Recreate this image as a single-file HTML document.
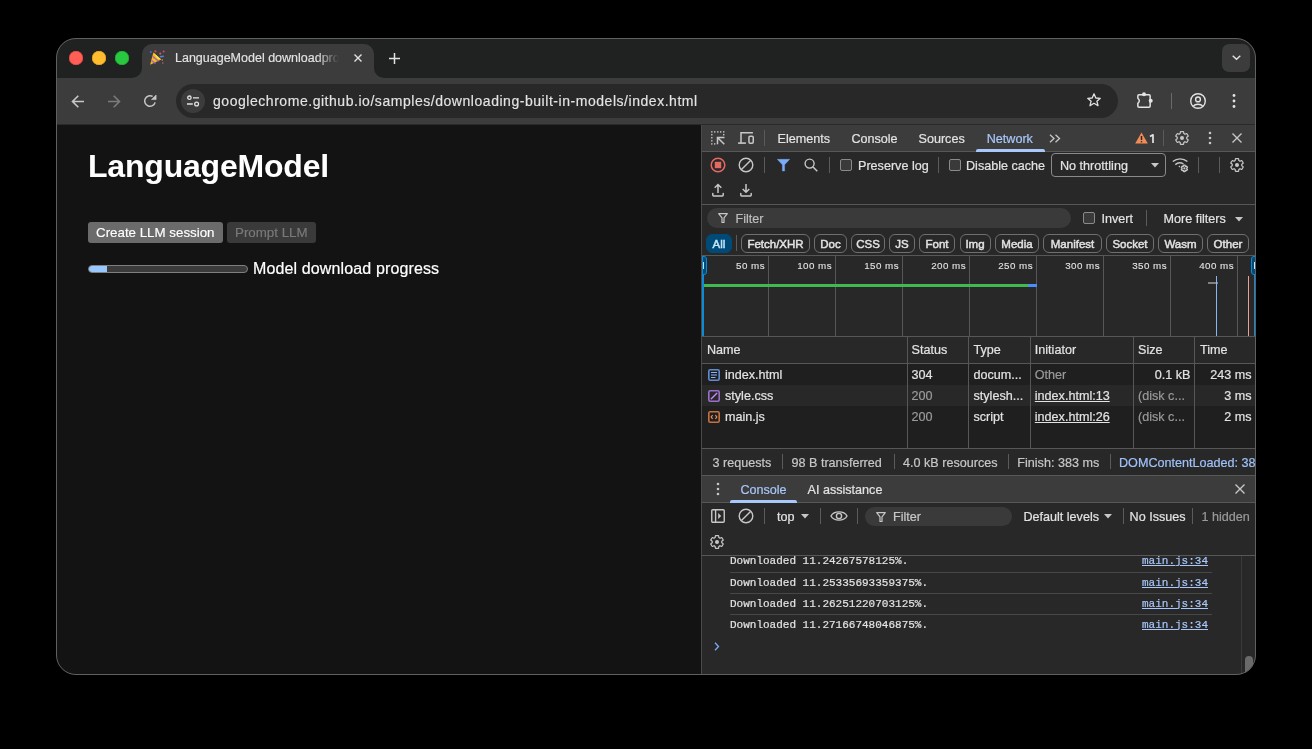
<!DOCTYPE html>
<html><head><meta charset="utf-8">
<style>
*{box-sizing:border-box}
html,body{margin:0;padding:0}
body{width:1312px;height:749px;background:#000;position:relative;overflow:hidden;font-family:"Liberation Sans",sans-serif;}
#win{position:absolute;left:0;top:0;width:1312px;height:749px;clip-path:inset(38px 56px 74px 56px round 20px);will-change:transform}
.a{position:absolute}
.t{position:absolute;white-space:nowrap;line-height:1}
.dt{font-size:12.6px;color:#e3e3e3;margin-top:1px;-webkit-text-stroke:0.2px currentColor}
svg{position:absolute;overflow:visible}
.sep{position:absolute;width:1px;background:#5b5b5b}
.chip{position:absolute;top:234px;height:19px;border:1px solid #6f6f6f;border-radius:6px;color:#e3e3e3;font-size:11.5px;line-height:18px;text-align:center;-webkit-text-stroke:0.45px currentColor}
.hl{position:absolute;height:1px;background:#575757}
.vl{position:absolute;width:1px;background:#575757}
.mono{font-family:"Liberation Mono",monospace;font-size:11px;-webkit-text-stroke:0.2px currentColor}
</style></head><body>
<div id="win">
  <!-- tab strip -->
  <div class="a" style="left:56px;top:38px;width:1200px;height:40px;background:#202121"></div>
  <!-- traffic lights -->
  <div class="a" style="left:69px;top:51px;width:14px;height:14px;border-radius:50%;background:#ff5f57;box-shadow:inset 0 0 0 0.6px #e0443e"></div>
  <div class="a" style="left:92px;top:51px;width:14px;height:14px;border-radius:50%;background:#febc2e;box-shadow:inset 0 0 0 0.6px #dea123"></div>
  <div class="a" style="left:115px;top:51px;width:14px;height:14px;border-radius:50%;background:#28c840;box-shadow:inset 0 0 0 0.6px #1aab29"></div>
  <!-- active tab -->
  <div class="a" style="left:142px;top:44px;width:232px;height:40px;background:#3c3c3c;border-radius:10px 10px 0 0"></div>
  <div class="a" style="left:132px;top:68px;width:10px;height:10px;background:#3c3c3c"></div>
  <div class="a" style="left:132px;top:68px;width:10px;height:10px;background:#202121;border-radius:0 0 10px 0"></div>
  <div class="a" style="left:374px;top:68px;width:10px;height:10px;background:#3c3c3c"></div>
  <div class="a" style="left:374px;top:68px;width:10px;height:10px;background:#202121;border-radius:0 0 0 10px"></div>
  <div class="t" id="tabtitle" style="left:175px;top:52px;font-size:12.5px;color:#e3e3e3;-webkit-text-stroke:0.15px currentColor;width:168px;overflow:hidden;-webkit-mask-image:linear-gradient(90deg,#000 142px,transparent 164px)">LanguageModel downloadprogress</div>
  <!-- party emoji approx -->
  <svg style="left:146px;top:46px" width="24" height="24" viewBox="0 0 24 24">
    <path d="M4.2 18.8 L7.3 6.6 L15.2 13.6 Z" fill="#f2c200"/>
    <path d="M7.3 6.6 L15.2 13.6 L11.5 12.8 Z" fill="#ffe14d"/>
    <path d="M6.6 10.4 L12.6 15.3 M5.4 14.6 L9.6 17.3" stroke="#b05cd6" stroke-width="1.4"/>
    <circle cx="4.8" cy="6" r="1.1" fill="#2f6fd8"/>
    <circle cx="9.4" cy="5.3" r="1.1" fill="#e0405a"/>
    <circle cx="14.3" cy="7.6" r="1.1" fill="#d8507a"/>
    <circle cx="17.6" cy="5.6" r="1" fill="#d84a6a"/>
    <path d="M13.8 10.8 L17.8 10.2" stroke="#4a86e8" stroke-width="1.5"/>
    <circle cx="16.3" cy="14" r="0.8" fill="#e08a20"/>
    <circle cx="16.8" cy="17" r="0.8" fill="#c06080"/>
  </svg>
  <!-- tab close -->
  <svg style="left:353.8px;top:53.7px" width="8" height="8" viewBox="0 0 8 8"><path d="M0.5 0.5 L7.5 7.5 M7.5 0.5 L0.5 7.5" stroke="#e3e3e3" stroke-width="1.4"/></svg>
  <!-- new tab + -->
  <svg style="left:389px;top:52.5px" width="11" height="11" viewBox="0 0 11 11"><path d="M5.5 0 V11 M0 5.5 H11" stroke="#e3e3e3" stroke-width="1.5"/></svg>
  <!-- tab search dropdown -->
  <div class="a" style="left:1222px;top:44px;width:28px;height:27.5px;background:#3c3c3c;border-radius:7px"></div>
  <svg style="left:1231.5px;top:54.5px" width="9" height="5" viewBox="0 0 9 5"><path d="M0.7 0.7 L4.5 4.2 L8.3 0.7" stroke="#e3e3e3" stroke-width="1.4" fill="none"/></svg>

  <!-- toolbar -->
  <div class="a" style="left:56px;top:78px;width:1200px;height:46px;background:#3c3c3c"></div>
  <div class="a" style="left:56px;top:124px;width:1200px;height:1px;background:#2a2a2a"></div>
  <svg style="left:71px;top:94.5px" width="14" height="13" viewBox="0 0 14 13"><path d="M13 6.5 H1.5 M7.3 0.7 L1.5 6.5 L7.3 12.3" stroke="#c7c7c7" stroke-width="1.6" fill="none"/></svg>
  <svg style="left:107px;top:94.5px" width="14" height="13" viewBox="0 0 14 13"><path d="M1 6.5 H12.5 M6.7 0.7 L12.5 6.5 L6.7 12.3" stroke="#7b7b7b" stroke-width="1.6" fill="none"/></svg>
  <svg style="left:143px;top:94px" width="14" height="14" viewBox="0 0 14 14"><path d="M9.65 2.41 A5.3 5.3 0 1 0 12.12 8.37" stroke="#c7c7c7" stroke-width="1.5" fill="none"/><path d="M8.5 5.6 H13.1 V1 Z" fill="#c7c7c7" stroke="#c7c7c7" stroke-width="0.6" stroke-linejoin="round"/></svg>
  <div class="a" style="left:176px;top:84px;width:942px;height:34px;border-radius:17px;background:#282828"></div>
  <div class="a" style="left:181px;top:89px;width:24px;height:24px;border-radius:50%;background:#3c3c3c"></div>
  <svg style="left:186px;top:95px" width="14" height="12" viewBox="0 0 14 12"><circle cx="3.4" cy="2.7" r="1.7" stroke="#e3e3e3" stroke-width="1.3" fill="none"/><path d="M7 2.8 H13 M1 9 H6.8" stroke="#e3e3e3" stroke-width="1.3"/><circle cx="10.6" cy="9" r="1.9" stroke="#e3e3e3" stroke-width="1.3" fill="none"/></svg>
  <div class="t" id="url" style="left:213px;top:94.2px;font-size:14px;letter-spacing:0.54px;color:#e3e3e3;-webkit-text-stroke:0.15px currentColor">googlechrome.github.io/samples/downloading-built-in-models/index.html</div>
  <svg style="left:1087px;top:93px" width="14" height="14" viewBox="0 0 14 14"><path d="M7 0.8 L8.8 5 L13.3 5.3 L9.9 8.2 L11 12.7 L7 10.3 L3 12.7 L4.1 8.2 L0.7 5.3 L5.2 5 Z" stroke="#e3e3e3" stroke-width="1.3" fill="none" stroke-linejoin="round"/></svg>
  <svg style="left:1136px;top:91px" width="18" height="18" viewBox="0 0 18 18"><path d="M1.85 5 Q1.85 3.85 3 3.85 H13 Q14.15 3.85 14.15 5 V15 Q14.15 16.15 13 16.15 H3 Q1.85 16.15 1.85 15 V12.4 Q4.8 9.8 1.85 7.2 Z" stroke="#e3e3e3" stroke-width="1.5" fill="none" stroke-linejoin="round"/><circle cx="8" cy="3.3" r="2" fill="#e3e3e3"/><circle cx="14.7" cy="9.8" r="2" fill="#e3e3e3"/></svg>
  <div class="sep" style="left:1171px;top:93px;height:16px;background:#6a6a6a"></div>
  <svg style="left:1190px;top:93px" width="16" height="16" viewBox="0 0 16 16"><circle cx="8" cy="8" r="7.3" stroke="#e3e3e3" stroke-width="1.4" fill="none"/><circle cx="8" cy="6.4" r="2.4" stroke="#e3e3e3" stroke-width="1.4" fill="none"/><path d="M3.3 13.2 C5.2 10.6 10.8 10.6 12.7 13.2" stroke="#e3e3e3" stroke-width="1.4" fill="none"/></svg>
  <svg style="left:1232px;top:93px" width="4" height="16" viewBox="0 0 4 16"><circle cx="2" cy="2.5" r="1.4" fill="#e3e3e3"/><circle cx="2" cy="8" r="1.4" fill="#e3e3e3"/><circle cx="2" cy="13.5" r="1.4" fill="#e3e3e3"/></svg>

  <!-- page content -->
  <div class="a" style="left:56px;top:125px;width:645px;height:550px;background:#131313"></div>
  <div class="t" id="h1" style="left:88px;top:150px;font-size:32px;letter-spacing:-0.2px;font-weight:bold;color:#fff">LanguageModel</div>
  <div class="a" style="left:88px;top:222px;width:135px;height:21px;background:#6b6b6b;border-radius:3px"></div>
  <div class="t" style="left:96px;top:225.7px;font-size:13.33px;color:#fff;-webkit-text-stroke:0.15px currentColor">Create LLM session</div>
  <div class="a" style="left:227px;top:222px;width:89px;height:21px;background:#3a3a3a;border-radius:3px"></div>
  <div class="t" style="left:235px;top:225.7px;font-size:13.33px;color:#7a7a7a;-webkit-text-stroke:0.15px currentColor">Prompt LLM</div>
  <div class="a" style="left:88px;top:265px;width:160px;height:8px;background:#3b3b3b;border:1px solid #7f7f7f;border-radius:4px;overflow:hidden"><div style="width:18px;height:100%;background:#99c8ff"></div></div>
  <div class="t" id="mdp" style="left:253px;top:261px;font-size:16px;letter-spacing:0.13px;color:#fff;-webkit-text-stroke:0.2px currentColor">Model download progress</div>

  <!-- devtools -->
  <div class="a" style="left:701px;top:125px;width:1px;height:550px;background:#4a4a4a"></div>
  <div class="a" style="left:702px;top:125px;width:554px;height:550px;background:#282828"></div>
  <!-- main tab bar -->
  <div class="a" style="left:702px;top:125px;width:554px;height:26px;background:#3c3c3c"></div>
  <div class="hl" style="left:702px;top:151px;width:554px;"></div>
  <svg style="left:710px;top:130px" width="16" height="16" viewBox="0 0 16 16"><rect x="1.10" y="1.20" width="1.4" height="1.4" fill="#c7c7c7"/><rect x="4.00" y="1.20" width="1.4" height="1.4" fill="#c7c7c7"/><rect x="7.10" y="1.20" width="1.4" height="1.4" fill="#c7c7c7"/><rect x="10.00" y="1.20" width="1.4" height="1.4" fill="#c7c7c7"/><rect x="13.00" y="1.20" width="1.4" height="1.4" fill="#c7c7c7"/><rect x="1.10" y="4.00" width="1.4" height="1.4" fill="#c7c7c7"/><rect x="1.10" y="7.10" width="1.4" height="1.4" fill="#c7c7c7"/><rect x="1.10" y="10.10" width="1.4" height="1.4" fill="#c7c7c7"/><rect x="1.10" y="13.20" width="1.4" height="1.4" fill="#c7c7c7"/><rect x="13.00" y="4.00" width="1.4" height="1.4" fill="#c7c7c7"/><rect x="4.00" y="13.20" width="1.4" height="1.4" fill="#c7c7c7"/><path d="M7.5 14.2 V7.5 H14.5 M7.5 7.5 L14.3 14.3" stroke="#c7c7c7" stroke-width="1.5" fill="none"/></svg>
  <svg style="left:737px;top:130px" width="18" height="16" viewBox="0 0 18 16"><path d="M15.9 2.8 H4 V13" stroke="#c7c7c7" stroke-width="1.5" fill="none"/><path d="M1.1 13.1 H8.9" stroke="#c7c7c7" stroke-width="1.6"/><rect x="11.95" y="6.15" width="4.3" height="7.1" rx="1.2" stroke="#c7c7c7" stroke-width="1.5" fill="none"/></svg>
  <div class="sep" style="left:764px;top:130px;height:16px"></div>
  <div class="t dt" style="left:777.5px;top:132.3px">Elements</div>
  <div class="t dt" style="left:851.4px;top:132.3px">Console</div>
  <div class="t dt" style="left:918.5px;top:132.3px">Sources</div>
  <div class="t dt" style="left:986.7px;top:132.3px;color:#a8c7fa">Network</div>
  <div class="a" style="left:976px;top:148.5px;width:69px;height:3px;background:#a8c7fa;border-radius:2px 2px 0 0"></div>
  <svg style="left:1049px;top:134px" width="12" height="9" viewBox="0 0 12 9"><path d="M1 0.8 L5 4.5 L1 8.2 M6.5 0.8 L10.5 4.5 L6.5 8.2" stroke="#c7c7c7" stroke-width="1.3" fill="none"/></svg>
  <svg style="left:1134.5px;top:131.5px" width="13" height="12" viewBox="0 0 13 12"><path d="M6.5 0.5 L12.8 11.5 H0.2 Z" fill="#f28b55"/><path d="M6.5 4 V8" stroke="#282828" stroke-width="1.5"/><circle cx="6.5" cy="9.8" r="0.8" fill="#282828"/></svg>
  <svg style="left:1149px;top:133.5px" width="6" height="10" viewBox="0 0 6 10"><path d="M4 9 V0.8 L1 2.6" stroke="#e3e3e3" stroke-width="1.7" fill="none" stroke-linejoin="round"/></svg>
  <div class="sep" style="left:1163px;top:130px;height:16px"></div>
  <svg style="left:1173.5px;top:130px" width="16" height="16" viewBox="0 0 24 24"><path d="M19.14 12.94c.04-.3.06-.61.06-.94 0-.32-.02-.64-.07-.94l2.03-1.58a.49.49 0 0 0 .12-.61l-1.92-3.32a.488.488 0 0 0-.59-.22l-2.39.96c-.5-.38-1.03-.7-1.62-.94l-.36-2.54a.484.484 0 0 0-.48-.41h-3.84c-.24 0-.43.17-.47.41l-.36 2.54c-.59.24-1.13.57-1.62.94l-2.39-.96c-.22-.08-.47 0-.59.22L2.74 8.87c-.12.21-.08.47.12.61l2.03 1.58c-.05.3-.09.63-.09.94s.02.64.07.94l-2.03 1.58a.49.49 0 0 0-.12.61l1.92 3.32c.12.22.37.29.59.22l2.39-.96c.5.38 1.03.7 1.62.94l.36 2.54c.05.24.24.41.48.41h3.84c.24 0 .44-.17.47-.41l.36-2.54c.59-.24 1.13-.56 1.62-.94l2.39.96c.22.08.47 0 .59-.22l1.92-3.32c.12-.22.07-.47-.12-.61l-2.01-1.58z" stroke="#c7c7c7" stroke-width="1.8" fill="none"/><circle cx="12" cy="12" r="3" fill="#c7c7c7"/></svg>
  <svg style="left:1208px;top:131px" width="4" height="14" viewBox="0 0 4 14"><circle cx="2" cy="2" r="1.3" fill="#c7c7c7"/><circle cx="2" cy="7" r="1.3" fill="#c7c7c7"/><circle cx="2" cy="12" r="1.3" fill="#c7c7c7"/></svg>
  <svg style="left:1232px;top:133px" width="10" height="10" viewBox="0 0 10 10"><path d="M0.5 0.5 L9.5 9.5 M9.5 0.5 L0.5 9.5" stroke="#c7c7c7" stroke-width="1.4"/></svg>

  <!-- network toolbar -->
  <svg style="left:710px;top:157px" width="16" height="16" viewBox="0 0 16 16"><circle cx="8" cy="8" r="6.8" stroke="#e46962" stroke-width="1.5" fill="none"/><rect x="4.8" y="4.8" width="6.4" height="6.4" fill="#e46962"/></svg>
  <svg style="left:738px;top:157px" width="16" height="16" viewBox="0 0 16 16"><circle cx="8" cy="8" r="6.8" stroke="#c7c7c7" stroke-width="1.4" fill="none"/><path d="M3.2 12.8 L12.8 3.2" stroke="#c7c7c7" stroke-width="1.4"/></svg>
  <div class="sep" style="left:764px;top:157px;height:16px"></div>
  <svg style="left:776.5px;top:158.8px" width="13" height="13" viewBox="0 0 13 13"><path d="M0.3 0.3 H12.7 L7.6 5.8 V12 H5.4 V5.8 Z" fill="#7cacf8" stroke="#7cacf8" stroke-width="0.4" stroke-linejoin="round"/></svg>
  <svg style="left:804px;top:158px" width="14" height="14" viewBox="0 0 14 14"><circle cx="5.6" cy="5.6" r="4.5" stroke="#c7c7c7" stroke-width="1.4" fill="none"/><path d="M9 9 L13.3 13.3" stroke="#c7c7c7" stroke-width="1.5"/></svg>
  <div class="sep" style="left:829px;top:157px;height:16px"></div>
  <div class="a" style="left:840px;top:159px;width:12px;height:12px;border:1px solid #8a8a8a;border-radius:2px;background:#3a3a3a"></div>
  <div class="t dt" style="left:858px;top:159.3px">Preserve log</div>
  <div class="sep" style="left:938px;top:157px;height:16px"></div>
  <div class="a" style="left:949px;top:159px;width:12px;height:12px;border:1px solid #8a8a8a;border-radius:2px;background:#3a3a3a"></div>
  <div class="t dt" style="left:966px;top:159.3px">Disable cache</div>
  <div class="a" style="left:1051px;top:153px;width:115px;height:24px;border:1px solid #8a8a8a;border-radius:4px"></div>
  <div class="t dt" style="left:1060px;top:159.3px">No throttling</div>
  <svg style="left:1151px;top:162.5px" width="8" height="5" viewBox="0 0 8 5"><path d="M0 0 H8 L4 4.5 Z" fill="#c7c7c7"/></svg>
  <svg style="left:1172px;top:157px" width="17" height="15" viewBox="0 0 17 15"><path d="M0.8 4.6 A11 11 0 0 1 15.4 4.6 M3.3 7.6 A7 7 0 0 1 11.5 7" stroke="#c7c7c7" stroke-width="1.4" fill="none"/><path d="M6.3 9.6 L8 8.6 V10.6 Z" fill="#c7c7c7"/><g transform="translate(8.4 7.4) scale(0.33)"><path d="M19.14 12.94c.04-.3.06-.61.06-.94 0-.32-.02-.64-.07-.94l2.03-1.58a.49.49 0 0 0 .12-.61l-1.92-3.32a.488.488 0 0 0-.59-.22l-2.39.96c-.5-.38-1.03-.7-1.62-.94l-.36-2.54a.484.484 0 0 0-.48-.41h-3.84c-.24 0-.43.17-.47.41l-.36 2.54c-.59.24-1.13.57-1.62.94l-2.39-.96c-.22-.08-.47 0-.59.22L2.74 8.87c-.12.21-.08.47.12.61l2.03 1.58c-.05.3-.09.63-.09.94s.02.64.07.94l-2.03 1.58a.49.49 0 0 0-.12.61l1.92 3.32c.12.22.37.29.59.22l2.39-.96c.5.38 1.03.7 1.62.94l.36 2.54c.05.24.24.41.48.41h3.84c.24 0 .44-.17.47-.41l.36-2.54c.59-.24 1.13-.56 1.62-.94l2.39.96c.22.08.47 0 .59-.22l1.92-3.32c.12-.22.07-.47-.12-.61l-2.01-1.58z" stroke="#c7c7c7" stroke-width="4" fill="none"/><circle cx="12" cy="12" r="3.5" fill="#c7c7c7"/></g></svg>
  <div class="sep" style="left:1198px;top:157px;height:16px"></div>
  <div class="sep" style="left:1219px;top:157px;height:16px"></div>
  <svg style="left:1229px;top:157px" width="16" height="16" viewBox="0 0 24 24"><path d="M19.14 12.94c.04-.3.06-.61.06-.94 0-.32-.02-.64-.07-.94l2.03-1.58a.49.49 0 0 0 .12-.61l-1.920-3.32a.488.488 0 0 0-.59-.22l-2.39.96c-.5-.38-1.03-.7-1.62-.94l-.36-2.540a.484.484 0 0 0-.48-.41h-3.84c-.24 0-.43.17-.47.41l-.36 2.54c-.59.24-1.13.57-1.62.94l-2.39-.96c-.22-.08-.47 0-.59.22L2.74 8.87c-.12.21-.08.47.12.61l2.03 1.58c-.05.3-.09.63-.09.94s.02.64.07.94l-2.03 1.58a.49.49 0 0 0-.12.61l1.92 3.32c.12.22.37.29.59.22l2.39-.96c.5.38 1.030.7 1.62.94l.36 2.54c.05.24.24.41.48.41h3.84c.24 0 .44-.17.47-.41l.36-2.54c.59-.24 1.13-.56 1.62-.94l2.39.96c.22.08.47 0 .59-.22l1.92-3.32c.12-.22.07-.47-.12-.61l-2.01-1.58z" stroke="#c7c7c7" stroke-width="1.8" fill="none"/><circle cx="12" cy="12" r="3" fill="#c7c7c7"/></svg>
  <svg style="left:711px;top:183px" width="14" height="14" viewBox="0 0 14 14"><path d="M7 10 V1.5 M3.7 4.8 L7 1.5 L10.3 4.8" stroke="#c7c7c7" stroke-width="1.5" fill="none"/><path d="M1.8 10.6 V12.1 Q1.8 12.9 2.6 12.9 H11.4 Q12.2 12.9 12.2 12.1 V10.6" stroke="#c7c7c7" stroke-width="1.5" fill="none" stroke-linecap="round"/></svg>
  <svg style="left:739px;top:183px" width="14" height="14" viewBox="0 0 14 14"><path d="M7 1 V9.3 M3.7 6 L7 9.3 L10.3 6" stroke="#c7c7c7" stroke-width="1.5" fill="none"/><path d="M1.8 10.6 V12.1 Q1.8 12.9 2.6 12.9 H11.4 Q12.2 12.9 12.2 12.1 V10.6" stroke="#c7c7c7" stroke-width="1.5" fill="none" stroke-linecap="round"/></svg>
  <div class="hl" style="left:702px;top:204px;width:554px;"></div>

  <!-- filter row -->
  <div class="a" style="left:707px;top:208px;width:364px;height:20px;border-radius:10px;background:#3a3a3a"></div>
  <svg style="left:718px;top:213px" width="10" height="10" viewBox="0 0 10 10"><path d="M0.7 0.7 H9.3 L6 4.8 V9.5 H4 V4.8 Z" stroke="#c7c7c7" stroke-width="1.2" fill="none" stroke-linejoin="round"/></svg>
  <div class="t dt" style="left:735.5px;top:212.2px;color:#bdbdbd">Filter</div>
  <div class="a" style="left:1083px;top:212px;width:12px;height:12px;border:1px solid #8a8a8a;border-radius:2px;background:#3a3a3a"></div>
  <div class="t dt" style="left:1101.5px;top:212.2px">Invert</div>
  <div class="sep" style="left:1146px;top:210px;height:16px"></div>
  <div class="t dt" style="left:1163.5px;top:212.2px">More filters</div>
  <svg style="left:1235px;top:217px" width="8" height="5" viewBox="0 0 8 5"><path d="M0 0 H8 L4 4.5 Z" fill="#c7c7c7"/></svg>

  <!-- chips -->
  <div class="chip" style="left:706px;width:26px;background:#004a77;border-color:#004a77;color:#c2e7ff">All</div>
  <div class="sep" style="left:736px;top:235px;height:16px"></div>
  <div class="chip" style="left:741px;width:69px">Fetch/XHR</div>
  <div class="chip" style="left:814px;width:33px">Doc</div>
  <div class="chip" style="left:851px;width:34px">CSS</div>
  <div class="chip" style="left:889px;width:26px">JS</div>
  <div class="chip" style="left:919px;width:36px">Font</div>
  <div class="chip" style="left:959.5px;width:31px">Img</div>
  <div class="chip" style="left:995px;width:44px">Media</div>
  <div class="chip" style="left:1043px;width:59px">Manifest</div>
  <div class="chip" style="left:1106px;width:48px">Socket</div>
  <div class="chip" style="left:1158px;width:45px">Wasm</div>
  <div class="chip" style="left:1207px;width:42px">Other</div>
  <div class="hl" style="left:702px;top:255px;width:554px;"></div>

  <!-- timeline -->
  <div class="vl" style="left:768px;top:256px;height:80px"></div>
  <div class="vl" style="left:835px;top:256px;height:80px"></div>
  <div class="vl" style="left:902px;top:256px;height:80px"></div>
  <div class="vl" style="left:969px;top:256px;height:80px"></div>
  <div class="vl" style="left:1036px;top:256px;height:80px"></div>
  <div class="vl" style="left:1103px;top:256px;height:80px"></div>
  <div class="vl" style="left:1170px;top:256px;height:80px"></div>
  <div class="vl" style="left:1237px;top:256px;height:80px"></div>
  <div class="t" style="right:547px;top:261.2px;font-size:9.8px;letter-spacing:0.45px;color:#e3e3e3;-webkit-text-stroke:0.1px currentColor">50 ms</div>
  <div class="t" style="right:480px;top:261.2px;font-size:9.8px;letter-spacing:0.45px;color:#e3e3e3;-webkit-text-stroke:0.1px currentColor">100 ms</div>
  <div class="t" style="right:413px;top:261.2px;font-size:9.8px;letter-spacing:0.45px;color:#e3e3e3;-webkit-text-stroke:0.1px currentColor">150 ms</div>
  <div class="t" style="right:346px;top:261.2px;font-size:9.8px;letter-spacing:0.45px;color:#e3e3e3;-webkit-text-stroke:0.1px currentColor">200 ms</div>
  <div class="t" style="right:279px;top:261.2px;font-size:9.8px;letter-spacing:0.45px;color:#e3e3e3;-webkit-text-stroke:0.1px currentColor">250 ms</div>
  <div class="t" style="right:212px;top:261.2px;font-size:9.8px;letter-spacing:0.45px;color:#e3e3e3;-webkit-text-stroke:0.1px currentColor">300 ms</div>
  <div class="t" style="right:145px;top:261.2px;font-size:9.8px;letter-spacing:0.45px;color:#e3e3e3;-webkit-text-stroke:0.1px currentColor">350 ms</div>
  <div class="t" style="right:78px;top:261.2px;font-size:9.8px;letter-spacing:0.45px;color:#e3e3e3;-webkit-text-stroke:0.1px currentColor">400 ms</div>
  <div class="a" style="left:703px;top:284.4px;width:325px;height:2.4px;background:#3fb950"></div>
  <div class="a" style="left:1028px;top:284.4px;width:9px;height:2.4px;background:#4c8df6"></div>
  <div class="a" style="left:1208px;top:281.5px;width:10px;height:2px;background:#808080"></div>
  <div class="a" style="left:1216px;top:276px;width:1px;height:60px;background:#8ab4f8"></div>
  <div class="a" style="left:1248px;top:276px;width:1px;height:60px;background:#e8a09a"></div>
  <div class="a" style="left:702px;top:256px;width:2px;height:80px;background:#0e8ad6"></div>
  <div class="a" style="left:702px;top:256px;width:5px;height:19px;border:1px solid #0e8ad6;border-radius:0 3px 3px 0;background:#004a77"></div><div class="a" style="left:703px;top:262px;width:1.3px;height:7px;background:#c2e7ff"></div>
  <div class="a" style="left:1254px;top:256px;width:2px;height:80px;background:#0e8ad6"></div>
  <div class="a" style="left:1251px;top:256px;width:5px;height:19px;border:1px solid #0e8ad6;border-radius:3px 0 0 3px;background:#004a77"></div><div class="a" style="left:1253.5px;top:262px;width:1.3px;height:7px;background:#c2e7ff"></div>
  <div class="hl" style="left:702px;top:336px;width:554px;"></div>

  <!-- table -->
  <div class="a" style="left:702px;top:364px;width:554px;height:84px;background:#1f1f1f"></div>
  <div class="a" style="left:702px;top:385px;width:554px;height:21px;background:#282828"></div>
  <div class="hl" style="left:702px;top:363px;width:554px;"></div>
  <div class="vl" style="left:907px;top:337px;height:111px"></div>
  <div class="vl" style="left:968px;top:337px;height:111px"></div>
  <div class="vl" style="left:1030px;top:337px;height:111px"></div>
  <div class="vl" style="left:1133px;top:337px;height:111px"></div>
  <div class="vl" style="left:1194px;top:337px;height:111px"></div>
  <div class="t dt" style="left:707px;top:343.1px">Name</div>
  <div class="t dt" style="left:911.5px;top:343.1px">Status</div>
  <div class="t dt" style="left:973.5px;top:343.1px">Type</div>
  <div class="t dt" style="left:1034.8px;top:343.1px">Initiator</div>
  <div class="t dt" style="left:1138px;top:343.1px">Size</div>
  <div class="t dt" style="left:1200px;top:343.1px">Time</div>
  <!-- row icons -->
  <svg style="left:708px;top:369px" width="12" height="12" viewBox="0 0 12 12"><rect x="0.8" y="0.8" width="10.4" height="10.4" rx="1.4" stroke="#5f8bd0" stroke-width="1.6" fill="none"/><path d="M3 3.5 H9 M3 6 H9 M3 8.5 H7.5" stroke="#8ab4f8" stroke-width="1"/></svg>
  <svg style="left:708px;top:390px" width="12" height="12" viewBox="0 0 12 12"><rect x="0.8" y="0.8" width="10.4" height="10.4" rx="1.4" stroke="#9c6fcc" stroke-width="1.6" fill="none"/><path d="M3.3 8.7 L8.8 3.2" stroke="#c58af9" stroke-width="1.4" stroke-linecap="round"/></svg>
  <svg style="left:708px;top:411px" width="12" height="12" viewBox="0 0 12 12"><rect x="0.8" y="0.8" width="10.4" height="10.4" rx="1.4" stroke="#c47241" stroke-width="1.6" fill="none"/><path d="M4.6 4.2 L3.2 6 L4.6 7.8 M7.4 4.2 L8.8 6 L7.4 7.8" stroke="#ee8d5c" stroke-width="1.2" fill="none"/></svg>
  <div class="t dt" style="left:725px;top:368.2px">index.html</div>
  <div class="t dt" style="left:911.5px;top:368.2px">304</div>
  <div class="t dt" style="left:973.5px;top:368.2px">docum...</div>
  <div class="t dt" style="left:1034.8px;top:368.2px;color:#9a9a9a">Other</div>
  <div class="t dt" style="right:121.5px;top:368.2px">0.1 kB</div>
  <div class="t dt" style="right:60.5px;top:368.2px">243 ms</div>
  <div class="t dt" style="left:725px;top:389.2px">style.css</div>
  <div class="t dt" style="left:911.5px;top:389.2px;color:#9a9a9a">200</div>
  <div class="t dt" style="left:973.5px;top:389.2px">stylesh...</div>
  <div class="t dt" style="left:1034.8px;top:389.2px;text-decoration:underline">index.html:13</div>
  <div class="t dt" style="left:1138px;top:389.2px;color:#9a9a9a">(disk c...</div>
  <div class="t dt" style="right:60.5px;top:389.2px">3 ms</div>
  <div class="t dt" style="left:725px;top:410.3px">main.js</div>
  <div class="t dt" style="left:911.5px;top:410.3px;color:#9a9a9a">200</div>
  <div class="t dt" style="left:973.5px;top:410.3px">script</div>
  <div class="t dt" style="left:1034.8px;top:410.3px;text-decoration:underline">index.html:26</div>
  <div class="t dt" style="left:1138px;top:410.3px;color:#9a9a9a">(disk c...</div>
  <div class="t dt" style="right:60.5px;top:410.3px">2 ms</div>
  <div class="hl" style="left:702px;top:448px;width:554px;"></div>

  <!-- footer -->
  <div class="t dt" style="left:712.5px;top:455.6px;color:#c7c7c7">3 requests</div>
  <div class="sep" style="left:781.5px;top:454px;height:15px"></div>
  <div class="t dt" style="left:791.5px;top:455.6px;color:#c7c7c7">98 B transferred</div>
  <div class="sep" style="left:893.5px;top:454px;height:15px"></div>
  <div class="t dt" style="left:903px;top:455.6px;color:#c7c7c7">4.0 kB resources</div>
  <div class="sep" style="left:1007.5px;top:454px;height:15px"></div>
  <div class="t dt" style="left:1017.3px;top:455.6px;color:#c7c7c7">Finish: 383 ms</div>
  <div class="sep" style="left:1110px;top:454px;height:15px"></div>
  <div class="t dt" style="left:1119px;top:455.6px;color:#a0c2f9">DOMContentLoaded: 383 ms</div>
  <div class="a" style="left:1256px;top:449px;width:10px;height:26px;background:#000"></div>
  <div class="hl" style="left:702px;top:475px;width:554px;"></div>

  <!-- drawer -->
  <div class="a" style="left:702px;top:476px;width:554px;height:26px;background:#3c3c3c"></div>
  <div class="hl" style="left:702px;top:502px;width:554px;"></div>
  <svg style="left:716px;top:482px" width="4" height="14" viewBox="0 0 4 14"><circle cx="2" cy="2" r="1.3" fill="#c7c7c7"/><circle cx="2" cy="7" r="1.3" fill="#c7c7c7"/><circle cx="2" cy="12" r="1.3" fill="#c7c7c7"/></svg>
  <div class="t dt" style="left:740.4px;top:483.4px;color:#a8c7fa">Console</div>
  <div class="a" style="left:730px;top:499.5px;width:67px;height:3px;background:#a8c7fa;border-radius:2px 2px 0 0"></div>
  <div class="t dt" style="left:807.5px;top:483.4px">AI assistance</div>
  <svg style="left:1235px;top:484px" width="10" height="10" viewBox="0 0 10 10"><path d="M0.5 0.5 L9.5 9.5 M9.5 0.5 L0.5 9.5" stroke="#c7c7c7" stroke-width="1.4"/></svg>

  <!-- console toolbar -->
  <svg style="left:711px;top:509px" width="14" height="14" viewBox="0 0 14 14"><rect x="0.75" y="0.75" width="12.5" height="12.5" rx="1" stroke="#c7c7c7" stroke-width="1.4" fill="none"/><path d="M4.6 1 V13" stroke="#c7c7c7" stroke-width="1.4"/><path d="M7.2 4 L10.2 7 L7.2 10 Z" fill="#c7c7c7"/></svg>
  <svg style="left:738px;top:508px" width="16" height="16" viewBox="0 0 16 16"><circle cx="8" cy="8" r="6.8" stroke="#c7c7c7" stroke-width="1.4" fill="none"/><path d="M3.2 12.8 L12.8 3.2" stroke="#c7c7c7" stroke-width="1.4"/></svg>
  <div class="sep" style="left:764px;top:508px;height:16px"></div>
  <div class="t dt" style="left:777px;top:509.6px">top</div>
  <svg style="left:801px;top:514px" width="8" height="5" viewBox="0 0 8 5"><path d="M0 0 H8 L4 4.5 Z" fill="#c7c7c7"/></svg>
  <div class="sep" style="left:820px;top:508px;height:16px"></div>
  <svg style="left:830px;top:510px" width="18" height="12" viewBox="0 0 18 12"><path d="M1 6 C4 0.5 14 0.5 17 6 C14 11.5 4 11.5 1 6 Z" stroke="#c7c7c7" stroke-width="1.4" fill="none"/><circle cx="9" cy="6" r="2.6" stroke="#c7c7c7" stroke-width="1.4" fill="none"/></svg>
  <div class="sep" style="left:857px;top:508px;height:16px"></div>
  <div class="a" style="left:865px;top:507px;width:147px;height:19px;border-radius:10px;background:#3a3a3a"></div>
  <svg style="left:876px;top:511.5px" width="10" height="10" viewBox="0 0 10 10"><path d="M0.7 0.7 H9.3 L6 4.8 V9.5 H4 V4.8 Z" stroke="#c7c7c7" stroke-width="1.2" fill="none" stroke-linejoin="round"/></svg>
  <div class="t dt" style="left:893px;top:510px;color:#c7c7c7">Filter</div>
  <div class="t dt" style="left:1023.4px;top:509.6px">Default levels</div>
  <svg style="left:1104px;top:514px" width="8" height="5" viewBox="0 0 8 5"><path d="M0 0 H8 L4 4.5 Z" fill="#c7c7c7"/></svg>
  <div class="sep" style="left:1123px;top:508px;height:16px"></div>
  <div class="t dt" style="left:1129.6px;top:509.6px">No Issues</div>
  <div class="sep" style="left:1191.5px;top:508px;height:16px"></div>
  <div class="t dt" style="left:1201.5px;top:509.6px;color:#9a9a9a">1 hidden</div>
  <svg style="left:709px;top:534px" width="16" height="16" viewBox="0 0 24 24"><path d="M19.14 12.94c.04-.3.06-.61.06-.94 0-.32-.02-.64-.07-.94l2.03-1.58a.49.49 0 0 0 .12-.61l-1.92-3.32a.488.488 0 0 0-.59-.22l-2.39.96c-.5-.38-1.03-.7-1.62-.94l-.36-2.54a.484.484 0 0 0-.48-.41h-3.84c-.24 0-.43.17-.47.41l-.36 2.54c-.59.24-1.13.57-1.62.94l-2.39-.96c-.22-.08-.47 0-.59.22L2.74 8.87c-.12.21-.08.47.12.61l2.03 1.58c-.05.3-.09.63-.09.94s.02.64.07.94l-2.03 1.58a.49.49 0 0 0-.12.61l1.92 3.32c.12.22.37.29.59.22l2.39-.96c.5.38 1.03.7 1.62.94l.36 2.54c.05.24.24.41.48.41h3.84c.24 0 .44-.17.47-.41l.36-2.54c.59-.24 1.13-.56 1.62-.94l2.39.96c.22.08.47 0 .59-.22l1.92-3.32c.12-.22.07-.47-.12-.61l-2.01-1.58z" stroke="#c7c7c7" stroke-width="1.8" fill="none"/><circle cx="12" cy="12" r="3" fill="#c7c7c7"/></svg>
  <div class="hl" style="left:702px;top:555px;width:554px;"></div>

  <!-- console messages -->
  <div class="t mono" style="left:730px;top:556.4px;color:#e3e3e3">Downloaded 11.24267578125%.</div>
  <div class="t mono" style="left:1142px;top:556.4px;color:#a8c7fa;text-decoration:underline">main.js:34</div>
  <div class="hl" style="left:730px;top:572px;width:482px;background:#474747"></div>
  <div class="t mono" style="left:730px;top:577.5px;color:#e3e3e3">Downloaded 11.25335693359375%.</div>
  <div class="t mono" style="left:1142px;top:577.5px;color:#a8c7fa;text-decoration:underline">main.js:34</div>
  <div class="hl" style="left:730px;top:593px;width:482px;background:#474747"></div>
  <div class="t mono" style="left:730px;top:598.6px;color:#e3e3e3">Downloaded 11.26251220703125%.</div>
  <div class="t mono" style="left:1142px;top:598.6px;color:#a8c7fa;text-decoration:underline">main.js:34</div>
  <div class="hl" style="left:730px;top:614px;width:482px;background:#474747"></div>
  <div class="t mono" style="left:730px;top:619.6px;color:#e3e3e3">Downloaded 11.27166748046875%.</div>
  <div class="t mono" style="left:1142px;top:619.6px;color:#a8c7fa;text-decoration:underline">main.js:34</div>
  <svg style="left:713.5px;top:642px" width="6" height="9" viewBox="0 0 6 9"><path d="M1 0.8 L4.5 4.5 L1 8.2" stroke="#7cacf8" stroke-width="1.3" fill="none"/></svg>
  <div class="vl" style="left:1241px;top:556px;height:119px;background:#3a3a3a"></div>
  <div class="a" style="left:1245px;top:656px;width:8px;height:22px;border-radius:4px;background:#6a6a6a"></div>
</div>
<div class="a" style="left:56px;top:38px;width:1200px;height:637px;border:1px solid #606060;border-radius:20px"></div>
</body></html>
